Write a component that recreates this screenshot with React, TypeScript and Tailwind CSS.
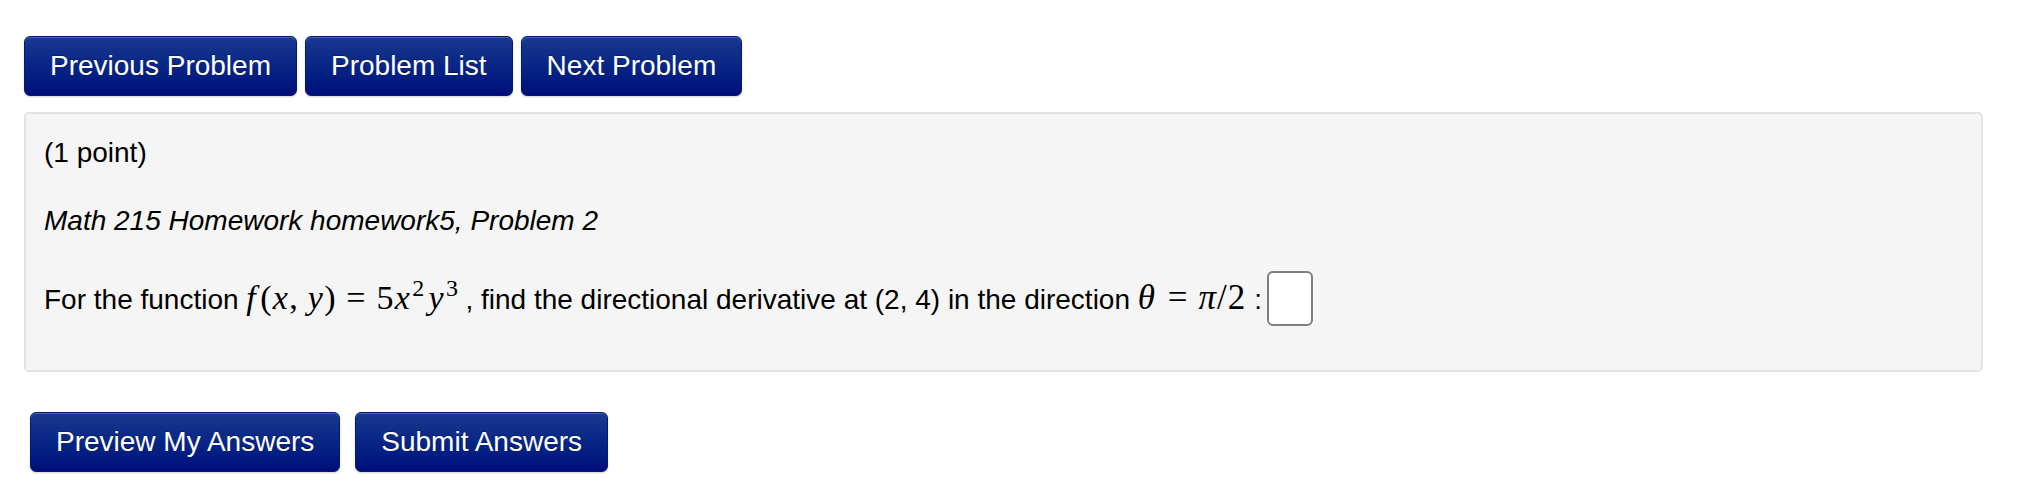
const NavButton = ({ label }: { label: string }) => (
  <button className="h-[60px] px-[25px] rounded-[6px] border border-[#06186f] bg-linear-to-b from-[#19388f] to-[#000c7b] text-white text-[28px] leading-none shadow-[inset_0_1px_0_rgba(255,255,255,0.22),0_1px_2px_rgba(0,0,0,0.18)] [text-shadow:0_-1px_0_rgba(0,0,0,0.25)]">
    {label}
  </button>
);

const App = () => {
  return (
    <div className="w-[2040px] h-[480px] bg-white text-black font-['Liberation_Sans',Arial,sans-serif] overflow-hidden">
      <div className="pt-[36px] pl-[24px]">
        {/* Problem navigation */}
        <div className="flex gap-[8px]">
          <NavButton label="Previous Problem" />
          <NavButton label="Problem List" />
          <NavButton label="Next Problem" />
        </div>

        {/* Problem body */}
        <div className="mt-[16px] w-[1959px] h-[260px] rounded-[5px] border-2 border-[#e3e3e3] bg-[#f5f5f5] pl-[18px] pt-[19px] text-[28px]">
          <div className="leading-[40px]">(1 point)</div>
          <div className="mt-[28px] leading-[40px] italic">Math 215 Homework homework5, Problem 2</div>
          <div className="mt-[29px] leading-[56px]">
            For the function{" "}
            <span className="font-['Liberation_Serif',serif] text-[34px] tracking-[0.04em]">
              <i className="mr-[3px]">f</i>(<i>x</i>,<span className="ml-[0.25em]" />
              <i>y</i>)<span className="mx-[0.28em]">=</span>5<i>x</i>
              <sup className="text-[24px] -top-[0.55em] ml-[1px]">2</sup>
              <i className="ml-[3px]">y</i>
              <sup className="text-[24px] -top-[0.55em] ml-[1px]">3</sup>
            </span>
            <span className="ml-[6px]">, find the directional derivative at (2, 4) in the direction</span>{" "}
            <span className="font-['Liberation_Serif',serif] text-[35px] tracking-[0.03em]">
              <i className="mr-[2px]">θ</i>
              <span className="mx-[0.28em]">=</span>
              <i>π</i>/2
            </span>{" "}
            :
            <span className="inline-block align-middle ml-[5px] w-[46px] h-[55px] rounded-[6px] border-2 border-[#7f7f7f] bg-white -mt-[6px]" />
          </div>
        </div>

        {/* Answer buttons */}
        <div className="mt-[40px] ml-[6px] flex gap-[15px]">
          <NavButton label="Preview My Answers" />
          <NavButton label="Submit Answers" />
        </div>
      </div>
    </div>
  );
};

export default App;
